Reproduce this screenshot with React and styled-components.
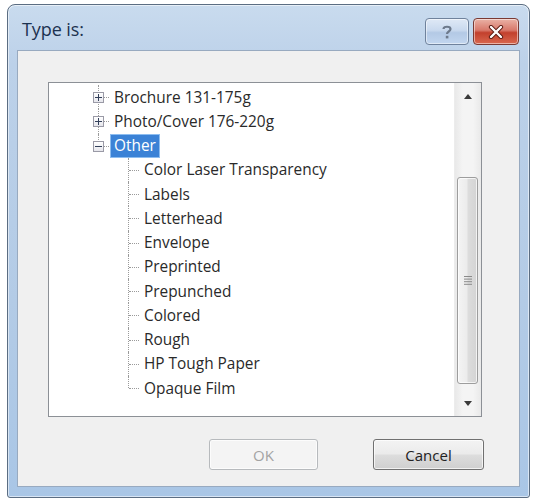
import React from 'react';
import styled, { createGlobalStyle } from 'styled-components';

const Global = createGlobalStyle`
  html, body {
    margin: 0;
    padding: 0;
    background: #ffffff;
  }
  body {
    font-family: "Open Sans", "Noto Sans", sans-serif;
  }
`;

const Page = styled.div`
  width: 534px;
  height: 501px;
  padding: 4px 4px 3px 7px;
  box-sizing: border-box;
`;

const Window = styled.div`
  width: 523px;
  height: 494px;
  box-sizing: border-box;
  display: flex;
  flex-direction: column;
  border: 1px solid #5b6d82;
  border-radius: 8px 8px 3px 3px;
  background: linear-gradient(180deg, #c9dbee 0%, #bcd1e9 12%, #b3cbe6 60%, #a9c6e6 100%);
  box-shadow: inset 0 0 0 1px rgba(255, 255, 255, 0.55);
  padding: 0 9px 10px 9px;
`;

const TitleBar = styled.div`
  height: 45px;
  display: flex;
  align-items: flex-start;
  justify-content: space-between;
  flex: none;
`;

const Title = styled.div`
  padding: 13px 0 0 5px;
  font-size: 18px;
  line-height: 22px;
  color: #1c3250;
  letter-spacing: -0.1px;
`;

const CaptionButtons = styled.div`
  display: flex;
  gap: 4px;
  margin-top: 13px;
  margin-right: 1px;
`;

const CaptionButton = styled.div`
  width: ${p => (p.$close ? 46 : 44)}px;
  height: 27px;
  box-sizing: border-box;
  border-radius: 4px;
  display: flex;
  align-items: center;
  justify-content: center;
  border: 1px solid ${p => (p.$close ? '#7b3a33' : '#6f829c')};
  background: ${p =>
    p.$close
      ? 'linear-gradient(180deg, #eab2a6 0%, #d8786a 45%, #c2402d 55%, #d9684f 100%)'
      : 'linear-gradient(180deg, #dfe9f6 0%, #c9d9ee 45%, #b3c9e5 55%, #c2d6ef 100%)'};
  box-shadow: inset 0 0 0 1px rgba(255, 255, 255, 0.5);
`;

const Client = styled.div`
  flex: 1;
  display: flex;
  flex-direction: column;
  background: #f0f0f0;
  border: 1px solid #98aac0;
`;

const TreeBox = styled.div`
  margin: 31px 37px 0 30px;
  height: 335px;
  box-sizing: border-box;
  border: 1px solid #8c9096;
  background: #ffffff;
  display: flex;
`;

const TreeArea = styled.div`
  flex: 1;
  padding-top: 2px;
  overflow: hidden;
`;

const Row = styled.div`
  height: 24.25px;
  display: flex;
  align-items: center;
  padding-left: ${p => 44 + p.$level * 35}px;
  font-size: 15.4px;
  color: #2a2a2a;
`;

const Connector = styled.div`
  position: relative;
  align-self: stretch;
  width: ${p => (p.$level === 0 ? 17 : 12)}px;
  flex: none;

  &::before {
    content: '';
    position: absolute;
    left: ${p => (p.$level === 0 ? 5 : 0)}px;
    top: 0;
    height: ${p => (p.$last ? '50%' : '100%')};
    border-left: 1px dotted #9a9a9a;
  }

  &::after {
    content: '';
    position: absolute;
    left: ${p => (p.$level === 0 ? 10 : 1)}px;
    right: 1px;
    top: 50%;
    border-top: 1px dotted #9a9a9a;
  }
`;

const Expander = styled.div`
  position: absolute;
  left: 0;
  top: 50%;
  margin-top: -5px;
  width: 11px;
  height: 11px;
  box-sizing: border-box;
  border: 1px solid #9a9aa6;
  background: linear-gradient(180deg, #ffffff, #e6e6ec);
  z-index: 1;
  display: flex;
  align-items: center;
  justify-content: center;
`;

const Label = styled.div`
  height: 24px;
  box-sizing: border-box;
  display: flex;
  align-items: center;
  padding: 0 4px;
  white-space: nowrap;
  ${p =>
    p.$selected &&
    `
    background: #3b82d6;
    color: #ffffff;
    box-shadow: inset 0 0 0 1px #8dbdf0;
  `}
`;

const ScrollBar = styled.div`
  width: 26px;
  flex: none;
  display: flex;
  flex-direction: column;
  background: linear-gradient(90deg, #e9e9e9, #f4f4f4 30%, #f4f4f4 70%, #e9e9e9);
  border-left: 1px solid #ececec;
`;

const ArrowButton = styled.div`
  height: 26px;
  flex: none;
  display: flex;
  align-items: center;
  justify-content: center;
`;

const Track = styled.div`
  flex: 1;
  display: flex;
  flex-direction: column;
  padding: 68px 3px 6px 2px;
`;

const Thumb = styled.div`
  flex: 1;
  border: 1px solid #9d9d9d;
  border-radius: 3px;
  background: linear-gradient(90deg, #f4f4f4 0%, #ececec 45%, #dcdcdc 55%, #d4d4d4 100%);
  box-shadow: inset 0 0 0 1px rgba(255, 255, 255, 0.7);
  display: flex;
  align-items: center;
  justify-content: center;
`;

const Footer = styled.div`
  display: flex;
  justify-content: flex-end;
  gap: 55px;
  padding: 22px 35px 0 0;
`;

const Button = styled.div`
  width: ${p => p.$w}px;
  height: 31px;
  box-sizing: border-box;
  border-radius: 3px;
  display: flex;
  align-items: center;
  justify-content: center;
  font-size: 15px;
  border: 1px solid ${p => (p.$disabled ? '#b7babd' : '#707070')};
  color: ${p => (p.$disabled ? '#a3a3a3' : '#222222')};
  background: ${p =>
    p.$disabled
      ? '#f4f4f4'
      : 'linear-gradient(180deg, #f3f3f3 0%, #ebebeb 48%, #dddddd 52%, #cfcfcf 100%)'};
  box-shadow: inset 0 0 0 1px rgba(255, 255, 255, 0.7);
`;

const Sign = ({ open }) => (
  <svg width="7" height="7" viewBox="0 0 7 7">
    <rect x="0" y="3" width="7" height="1" fill="#33405a" />
    {!open && <rect x="3" y="0" width="1" height="7" fill="#33405a" />}
  </svg>
);

const roots = [
  { label: 'Brochure 131-175g' },
  { label: 'Photo/Cover 176-220g' },
  { label: 'Other', open: true, selected: true },
];

const children = [
  'Color Laser Transparency',
  'Labels',
  'Letterhead',
  'Envelope',
  'Preprinted',
  'Prepunched',
  'Colored',
  'Rough',
  'HP Tough Paper',
  'Opaque Film',
];

export default function App() {
  return (
    <Page>
      <Global />
      <Window>
        <TitleBar>
          <Title>Type is:</Title>
          <CaptionButtons>
            <CaptionButton>
              <svg width="12" height="16" viewBox="0 0 12 16">
                <path
                  d="M2.5 5 C2.5 2 9.5 2 9.5 5 C9.5 7.5 6 7.5 6 10"
                  fill="none"
                  stroke="#6d7a8c"
                  strokeWidth="2.2"
                />
                <rect x="4.8" y="11.8" width="2.6" height="2.6" fill="#6d7a8c" />
              </svg>
            </CaptionButton>
            <CaptionButton $close>
              <svg width="16" height="14" viewBox="0 0 16 14">
                <path d="M3 2 L13 12 M13 2 L3 12" stroke="#5a1a12" strokeWidth="4.2" strokeLinecap="round" />
                <path d="M3 2 L13 12 M13 2 L3 12" stroke="#ffffff" strokeWidth="2.4" strokeLinecap="round" />
              </svg>
            </CaptionButton>
          </CaptionButtons>
        </TitleBar>
        <Client>
          <TreeBox>
            <TreeArea>
              {roots.map((r, i) => (
                <Row key={r.label} $level={0}>
                  <Connector $level={0} $last={i === roots.length - 1}>
                    <Expander>
                      <Sign open={r.open} />
                    </Expander>
                  </Connector>
                  <Label $selected={r.selected}>{r.label}</Label>
                </Row>
              ))}
              {children.map((c, i) => (
                <Row key={c} $level={1}>
                  <Connector $level={1} $last={i === children.length - 1} />
                  <Label>{c}</Label>
                </Row>
              ))}
            </TreeArea>
            <ScrollBar>
              <ArrowButton>
                <svg width="8" height="5" viewBox="0 0 8 5">
                  <path d="M0 5 L4 0 L8 5 Z" fill="#3a3a3a" />
                </svg>
              </ArrowButton>
              <Track>
                <Thumb>
                  <svg width="8" height="9" viewBox="0 0 8 9">
                    <rect y="0" width="8" height="1" fill="#8a8a8a" />
                    <rect y="2.6" width="8" height="1" fill="#8a8a8a" />
                    <rect y="5.2" width="8" height="1" fill="#8a8a8a" />
                    <rect y="7.8" width="8" height="1" fill="#8a8a8a" />
                  </svg>
                </Thumb>
              </Track>
              <ArrowButton>
                <svg width="8" height="5" viewBox="0 0 8 5">
                  <path d="M0 0 L8 0 L4 5 Z" fill="#3a3a3a" />
                </svg>
              </ArrowButton>
            </ScrollBar>
          </TreeBox>
          <Footer>
            <Button $w={109} $disabled>OK</Button>
            <Button $w={111}>Cancel</Button>
          </Footer>
        </Client>
      </Window>
    </Page>
  );
}
